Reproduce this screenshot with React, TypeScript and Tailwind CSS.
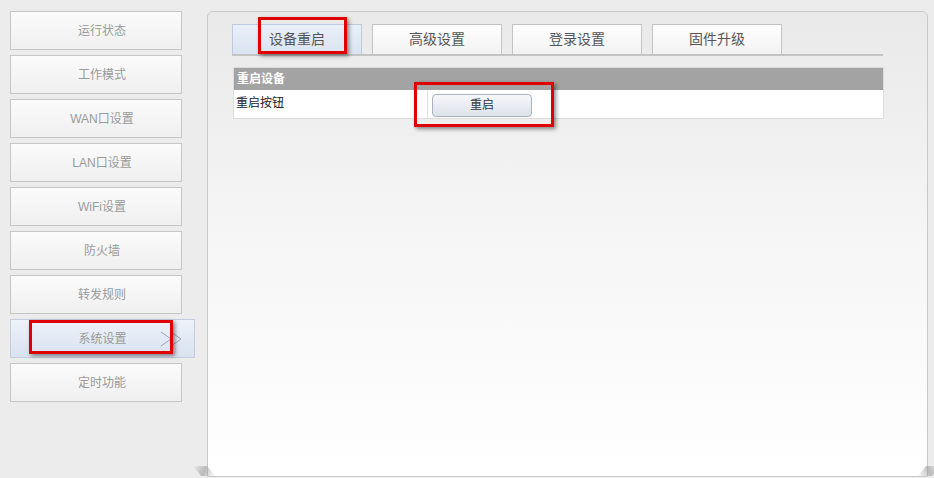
import React from "react";

const navItems = [
  "运行状态",
  "工作模式",
  "WAN口设置",
  "LAN口设置",
  "WiFi设置",
  "防火墙",
  "转发规则",
  "系统设置",
  "定时功能",
];

const tabs = ["设备重启", "高级设置", "登录设置", "固件升级"];

const font = { fontFamily: '"Liberation Sans", "Noto Sans CJK SC", sans-serif' };

const App = () => {
  return (
    <div
      className="relative w-[934px] h-[478px] bg-[#ececec] flex overflow-hidden"
      style={font}
    >
      {/* left menu */}
      <div className="w-[197px] pt-[11px] pl-[10px] flex flex-col gap-[5px]">
        {navItems.map((item) =>
          item === "系统设置" ? (
            <div
              key={item}
              className="relative h-[39px] w-[185px] border border-[#c3cddb] bg-gradient-to-b from-[#eef2f9] to-[#d9e2f0] flex items-center justify-center text-[12px] text-[#9a9a9a]"
            >
              {item}
              <svg
                className="absolute right-[10px] top-[11px]"
                width="24"
                height="16"
                viewBox="0 0 24 16"
                fill="none"
                stroke="#9aa3b0"
                strokeWidth="1"
              >
                <path d="M1 1 L11 8 L1 15" />
                <path d="M11 1 L21 8 L11 15" />
              </svg>
            </div>
          ) : (
            <div
              key={item}
              className="h-[39px] w-[172px] border border-[#c6c6c6] bg-gradient-to-b from-[#fbfbfb] to-[#efefef] flex items-center justify-center pl-[12px] text-[12px] text-[#9a9a9a]"
            >
              {item}
            </div>
          )
        )}
      </div>

      {/* main panel */}
      <div className="relative mt-[11px] ml-[10px] w-[721px] h-[466px] rounded-t-[6px] border border-[#c9c9c9] bg-gradient-to-b from-[#e9e9e9] via-[#f6f6f6] to-white pt-[12px] pl-[24px]">
        <div className="w-[651px] flex gap-[10px] border-b-2 border-[#c4c4c4]">
          {tabs.map((t, i) => (
            <div
              key={t}
              className={
                i === 0
                  ? "w-[130px] h-[30px] border border-[#bccbe0] border-b-0 bg-gradient-to-b from-[#eaf0f8] to-[#d9e3f1] flex items-center justify-center text-[14px] text-[#555]"
                  : "w-[130px] h-[30px] border border-[#c4c4c4] border-b-0 bg-gradient-to-b from-white to-[#f2f2f2] flex items-center justify-center text-[14px] text-[#555]"
              }
            >
              {t}
            </div>
          ))}
        </div>

        <div className="mt-[11px] ml-[1px] w-[651px] border border-[#dcdcdc] bg-white">
          <div className="h-[22px] bg-[#a3a3a3] flex items-center pl-[3px] text-[12px] font-bold text-white">
            重启设备
          </div>
          <div className="h-[28px] flex">
            <div className="w-[194px] border-r border-[#e4e4e4] pl-[2px] pt-[4px] text-[12px] text-[#222]">
              重启按钮
            </div>
            <div className="pl-[4px] pt-[2px]">
              <button className="w-[100px] h-[23px] rounded-[4px] border border-[#a9b1bd] bg-gradient-to-b from-[#f6f7fa] to-[#dde2ea] text-[12px] text-[#333]">
                重启
              </button>
            </div>
          </div>
        </div>
      </div>

      {/* page-curl shadows */}
      <div className="absolute left-[197px] top-[466px] w-[14px] h-[10px] bg-gradient-to-br from-transparent via-[#9a9a9a] to-transparent skew-x-[40deg] opacity-60" />
      <div className="absolute left-[922px] top-[466px] w-[14px] h-[10px] bg-gradient-to-bl from-transparent via-[#9a9a9a] to-transparent -skew-x-[40deg] opacity-60" />

      {/* red annotation boxes */}
      <div className="absolute left-[258px] top-[17px] w-[89px] h-[37px] border-[3px] border-[#e00000] shadow-[2px_2px_4px_rgba(0,0,0,0.45)]" />
      <div className="absolute left-[414px] top-[82px] w-[140px] h-[45px] border-[3px] border-[#e00000] shadow-[2px_2px_4px_rgba(0,0,0,0.45)]" />
      <div className="absolute left-[29px] top-[320px] w-[144px] h-[34px] border-[3px] border-[#e00000] shadow-[2px_2px_4px_rgba(0,0,0,0.45)]" />
    </div>
  );
};

export default App;
